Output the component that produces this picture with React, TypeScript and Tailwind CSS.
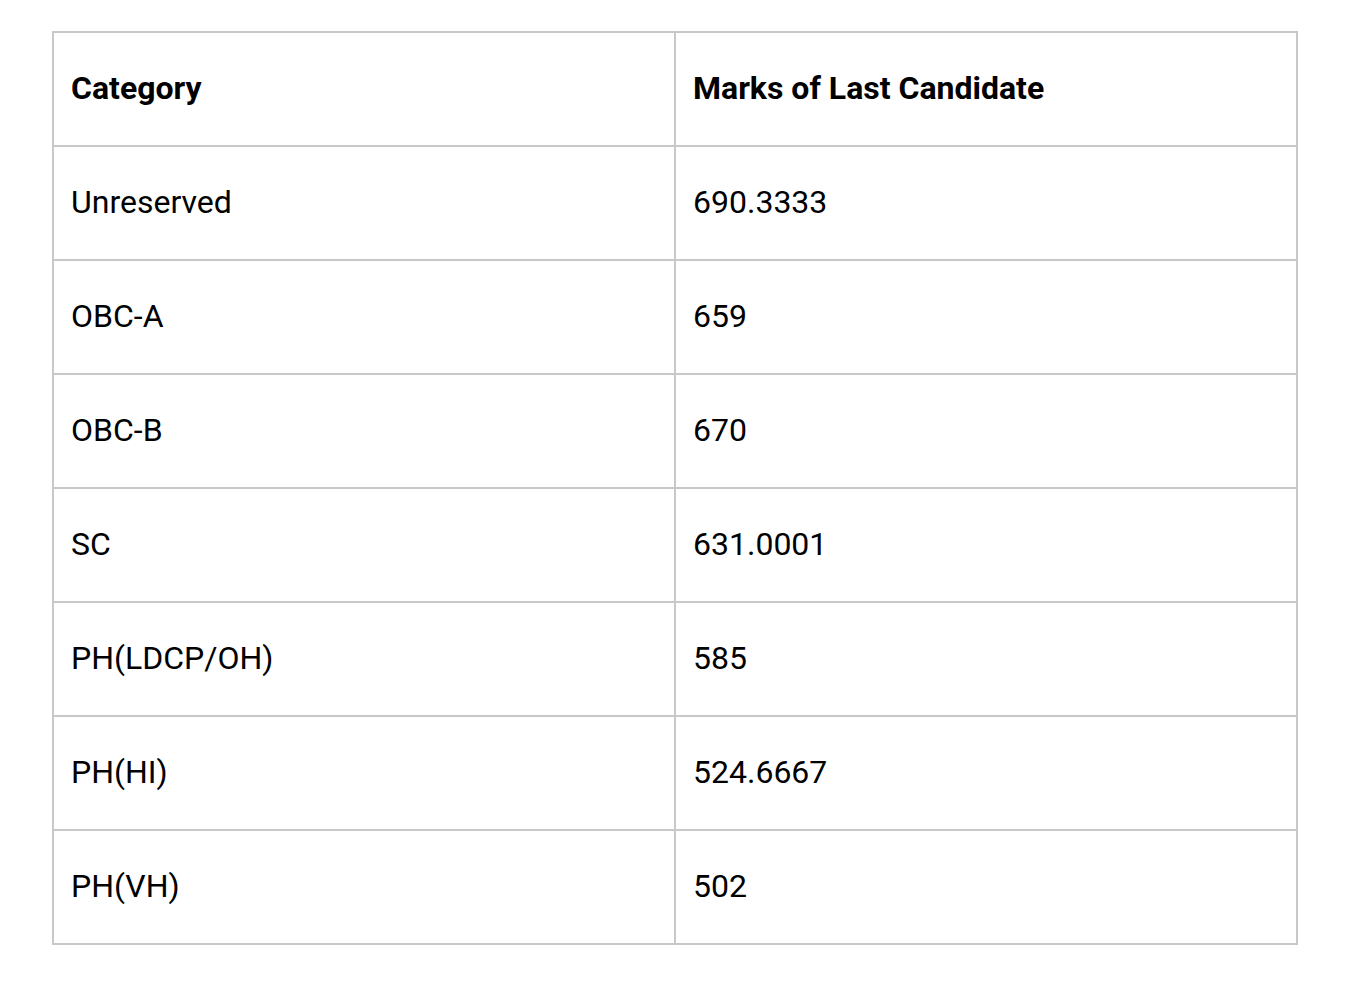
import React from "react";

const rows: [string, string][] = [
  ["Unreserved", "690.3333"],
  ["OBC-A", "659"],
  ["OBC-B", "670"],
  ["SC", "631.0001"],
  ["PH(LDCP/OH)", "585"],
  ["PH(HI)", "524.6667"],
  ["PH(VH)", "502"],
];

export default function App() {
  return (
    <div className="min-h-screen bg-white pt-[31px] pl-[52px]" style={{ fontFamily: "Roboto, 'Liberation Sans', sans-serif" }}>
      <div className="grid w-[1246px] grid-cols-[622px_622px] border-l-2 border-t-2 border-[#c8c8c8] text-[32px] text-black">
        <div className="flex h-[114px] items-center border-b-2 border-r-2 border-[#c8c8c8] pb-[3px] pl-[17px] font-bold">Category</div>
        <div className="flex h-[114px] items-center border-b-2 border-r-2 border-[#c8c8c8] pb-[3px] pl-[17px] font-bold">Marks of Last Candidate</div>
        {rows.map(([a, b]) => (
          <React.Fragment key={a}>
            <div className="flex h-[114px] items-center border-b-2 border-r-2 border-[#c8c8c8] pb-[3px] pl-[17px]">{a}</div>
            <div className="flex h-[114px] items-center border-b-2 border-r-2 border-[#c8c8c8] pb-[3px] pl-[17px]">{b}</div>
          </React.Fragment>
        ))}
      </div>
    </div>
  );
}
